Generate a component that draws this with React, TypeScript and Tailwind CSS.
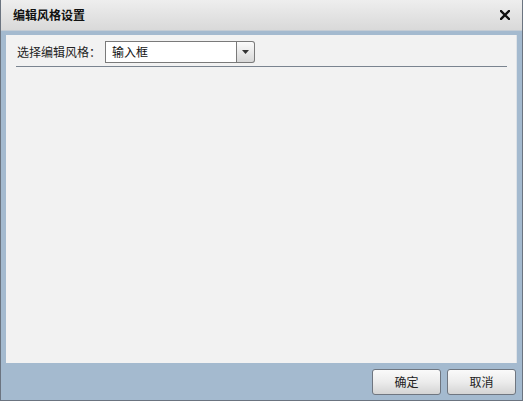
import React from 'react';

const font = { fontFamily: '"Noto Sans CJK SC", "Noto Sans", sans-serif' };

const DialogButton: React.FC<{ label: string }> = ({ label }) => (
  <button className="w-[69px] h-[26px] rounded-[3px] border border-[#6f7680] bg-gradient-to-b from-[#fafafa] via-[#ececec] to-[#d4d4d4] text-[12px] text-[#222] leading-none">
    {label}
  </button>
);

export default function App() {
  return (
    <div className="w-[523px] h-[401px] bg-white" style={font}>
      <div className="w-[523px] h-[401px] flex flex-col border-l border-r border-b border-[#6b7480] bg-[#a4bacf]">
        {/* title bar */}
        <div className="h-[31px] flex items-center justify-between pl-[12px] pr-[12px] bg-gradient-to-b from-[#eeeeee] to-[#d9d9d9] border-b border-[#c4ccd4]">
          <span className="text-[12px] font-bold text-[#111]">编辑风格设置</span>
          <svg width="10" height="10" viewBox="0 0 10 10">
            <path d="M1 1 L9 9 M9 1 L1 9" stroke="#111" strokeWidth="2.4" strokeLinecap="square" />
          </svg>
        </div>

        {/* body */}
        <div className="flex-1 flex flex-col pt-[4px] pl-[5px] pr-[5px]">
          <div className="flex-1 bg-[#f2f2f2] border-r border-[#dfe3e7] pt-[6px] pl-[10px] pr-[9px]">
            <div className="flex items-center h-[22px]">
              <span className="text-[12px] text-[#222] pl-[1px]">选择编辑风格：</span>
              <div className="ml-[4px] flex h-[22px] w-[150px]">
                <div className="flex-1 bg-white border border-[#7a7a7a] flex items-center pl-[6px] text-[12px] text-[#111]">
                  输入框
                </div>
                <div className="w-[18px] h-[22px] rounded-r-[3px] border border-l-0 border-[#7a7a7a] bg-gradient-to-b from-[#fbfbfb] to-[#d8d8d8] flex items-center justify-center">
                  <svg width="7" height="4" viewBox="0 0 7 4">
                    <path d="M0 0 H7 L3.5 4 Z" fill="#333" />
                  </svg>
                </div>
              </div>
            </div>
            <div className="mt-[3px] h-px bg-[#7a8490]" />
          </div>
        </div>

        {/* footer */}
        <div className="h-[37px] flex items-start justify-end gap-[6px] pt-[6px] pr-[6px]">
          <DialogButton label="确定" />
          <DialogButton label="取消" />
        </div>
      </div>
    </div>
  );
}
